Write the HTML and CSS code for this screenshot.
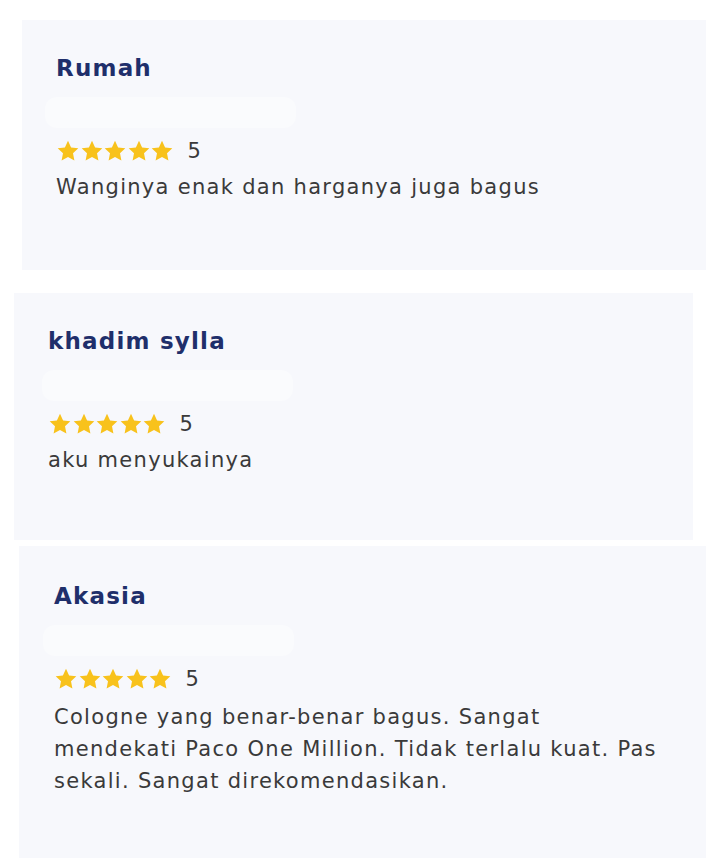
FILE: index.html
```html
<!DOCTYPE html>
<html lang="id">

<head>
  <meta charset="UTF-8" />
  <title>Ulasan</title>
  <meta name="viewport" content="width=device-width, initial-scale=1.0" />
  <link rel="stylesheet" href="styles.css">
</head>

<body>
  <svg width="0" height="0" class="defs">
    <symbol id="star" viewBox="0 0 24 24">
      <path d="M12 1.8l3.1 6.6 7.2.9-5.3 5 1.4 7.1L12 17.9l-6.4 3.5 1.4-7.1-5.3-5 7.2-.9z" />
    </symbol>
  </svg>

  <div class="review review-1">
    <h3 class="review-name">Rumah</h3>
    <div class="review-pill"></div>
    <div class="review-rating">
      <div class="stars">
        <svg><use href="#star" /></svg>
        <svg><use href="#star" /></svg>
        <svg><use href="#star" /></svg>
        <svg><use href="#star" /></svg>
        <svg><use href="#star" /></svg>
      </div>
      <span>5</span>
    </div>
    <p class="review-text">Wanginya enak dan harganya juga bagus</p>
  </div>

  <div class="review review-2">
    <h3 class="review-name">khadim sylla</h3>
    <div class="review-pill"></div>
    <div class="review-rating">
      <div class="stars">
        <svg><use href="#star" /></svg>
        <svg><use href="#star" /></svg>
        <svg><use href="#star" /></svg>
        <svg><use href="#star" /></svg>
        <svg><use href="#star" /></svg>
      </div>
      <span>5</span>
    </div>
    <p class="review-text">aku menyukainya</p>
  </div>

  <div class="review review-3">
    <h3 class="review-name">Akasia</h3>
    <div class="review-pill"></div>
    <div class="review-rating">
      <div class="stars">
        <svg><use href="#star" /></svg>
        <svg><use href="#star" /></svg>
        <svg><use href="#star" /></svg>
        <svg><use href="#star" /></svg>
        <svg><use href="#star" /></svg>
      </div>
      <span>5</span>
    </div>
    <p class="review-text">Cologne yang benar-benar bagus. Sangat mendekati Paco One Million. Tidak terlalu kuat. Pas sekali. Sangat direkomendasikan.</p>
  </div>
</body>

</html>
```

FILE: styles.css
```css
body {
  margin: 0;
  background: white;
  font-family: "DejaVu Sans", sans-serif;
  color: #3a3a3a;
}

.defs {
  position: absolute;
}

.review {
  box-sizing: border-box;
  background: #f7f8fc;
  padding: 33px 34px 0 34px;
}

.review-1 {
  margin: 20px 0 0 22px;
  width: 684px;
  height: 250px;
}

.review-2 {
  margin: 23px 0 0 14px;
  width: 679px;
  height: 247px;
}

.review-3 {
  margin: 6px 0 0 19px;
  width: 687px;
  height: 312px;
  padding: 35px 34px 0 35px;
}

.review-name {
  margin: 0;
  font-size: 23px;
  line-height: 30px;
  font-weight: 700;
  letter-spacing: 1.2px;
  color: #1f2f6b;
}

.review-pill {
  width: 251px;
  height: 31px;
  margin: 14px 0 0 -11px;
  background: #fafbfd;
  border-radius: 12px;
}

.review-2 .review-pill {
  margin-left: -6px;
}

.review-rating {
  display: flex;
  align-items: center;
  gap: 14px;
  height: 24px;
  margin-top: 11px;
  font-size: 21px;
}

.stars {
  display: flex;
}

.stars svg {
  width: 24px;
  height: 24px;
  margin-right: -0.5px;
  fill: #f8c21c;
}

.review-text {
  margin: 8px 0 0 0;
  font-size: 21px;
  line-height: 32px;
  letter-spacing: 1.3px;
  max-width: 612px;
}

.review-3 .review-text {
  margin-top: 10px;
}
```
